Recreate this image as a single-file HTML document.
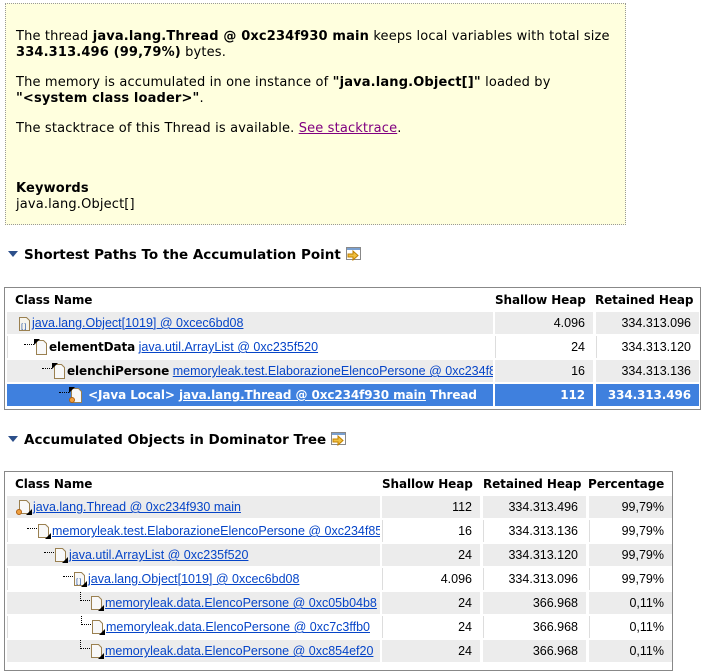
<!DOCTYPE html>
<html><head><meta charset="utf-8"><style>
*{margin:0;padding:0;box-sizing:border-box}
body{width:707px;height:662px;overflow:hidden;background:#fff;font-family:"Liberation Sans","DejaVu Sans",sans-serif;font-size:12.5px;color:#000;position:relative}
b,.hd,.sel{font-family:"DejaVu Sans","Liberation Sans",sans-serif;font-size:12px;letter-spacing:-0.1px}
.box{position:absolute;left:5px;top:3px;width:621px;height:222px;background:#ffffde;border:1px dotted #999;padding:25px 10px 0 10px;line-height:16px;font-family:"DejaVu Sans",sans-serif;font-size:13px;letter-spacing:0.15px}
.box b{font-size:13px;letter-spacing:0.15px}
.box p{margin-bottom:14px}
a{color:#0645c8;text-decoration:underline}
.h{position:absolute;left:8px;font-weight:bold;font-size:13.5px;font-family:"DejaVu Sans",sans-serif}
.h .tri{display:inline-block;width:0;height:0;border-left:5px solid transparent;border-right:5px solid transparent;border-top:6px solid #2c4f8a;margin-right:6px;vertical-align:2px}
.tb{position:absolute;border:1px solid #888;overflow:hidden}
.c{position:absolute;height:22px;line-height:22px;white-space:nowrap;overflow:hidden}
.g{background:#ececec}
.w{background:#fff;border-left:1px solid #ddd}
.r{text-align:right;padding-right:8px}
.hd{font-weight:bold;height:20px;line-height:20px}
.sel{background:#3f80de;color:#fff;font-weight:bold}
.sel a{color:#fff}
.ic{display:inline-block;vertical-align:-4px;margin-right:1px}
.dl{display:inline-block;border-bottom:1px dotted #000;width:10px;height:9px;border-left:1px dotted #000;vertical-align:6px}
</style></head><body>
<div class="box">
<p>The thread <b>java.lang.Thread @ 0xc234f930 main</b> keeps local variables with total size <b>334.313.496 (99,79%)</b> bytes.</p>
<p>The memory is accumulated in one instance of <b>"java.lang.Object[]"</b> loaded by <span style="white-space:nowrap"><b>"&lt;system class loader&gt;"</b>.</span></p>
<p>The stacktrace of this Thread is available. <a style="color:#800080">See stacktrace</a>.</p>
<p style="margin-top:44px;margin-bottom:0"><b>Keywords</b><br>java.lang.Object[]</p>
</div>

<div class="h" style="top:247px"><span class="tri"></span>Shortest Paths To the Accumulation Point <svg width="16" height="14" style="vertical-align:-2px"><rect x="0.5" y="0.5" width="14" height="12" fill="#fff" stroke="#888"/><rect x="1" y="1" width="13" height="2" fill="#7aa0d0"/><path d="M2 7h5v-3l5 4.5-5 4.5v-3H2z" fill="#f0c040" stroke="#c08000"/></svg></div>

<div class="tb" style="left:4px;top:287px;width:697px;height:123px">
<div class="c hd" style="left:10px;top:2px">Class Name</div>
<div class="c hd r" style="left:490px;top:2px;width:98px">Shallow Heap</div>
<div class="c hd r" style="left:590px;top:2px;width:104px">Retained Heap</div>

<div class="c g" style="left:2px;top:24px;width:486px;padding-left:11px"><svg class="ic" width="13" height="15"><path d="M1.5 1.5H8.5L11.5 4.5V14.5H1.5Z" fill="#f6f4ec" stroke="#9a8050"/><text x="3" y="13" font-size="7" fill="#2050a0" font-family="DejaVu Sans">[]</text></svg><a>java.lang.Object[1019] @ 0xcec6bd08</a></div>
<div class="c g r" style="left:490px;top:24px;width:98px">4.096</div>
<div class="c g r" style="left:591px;top:24px;width:103px">334.313.096</div>

<div class="c w" style="left:2px;top:48px;width:486px;padding-left:16px"><span class="dl" style="border-left:none"></span><svg class="ic" width="14" height="16"><path d="M2.5 1.5H9.5L12.5 4.5V15.5H2.5Z" fill="#f8f8f8" stroke="#9a8050"/><path d="M0 0H6L0 6Z" fill="#000"/></svg><b>elementData</b> <a>java.util.ArrayList @ 0xc235f520</a></div>
<div class="c w r" style="left:490px;top:48px;width:98px">24</div>
<div class="c w r" style="left:591px;top:48px;width:103px">334.313.120</div>

<div class="c g" style="left:2px;top:72px;width:486px;padding-left:35px"><span class="dl" style="border-left:none"></span><svg class="ic" width="14" height="16"><path d="M2.5 1.5H9.5L12.5 4.5V15.5H2.5Z" fill="#f8f8f8" stroke="#9a8050"/><path d="M0 0H6L0 6Z" fill="#000"/></svg><b>elenchiPersone</b> <a>memoryleak.test.ElaborazioneElencoPersone @ 0xc234f858</a></div>
<div class="c g r" style="left:490px;top:72px;width:98px">16</div>
<div class="c g r" style="left:591px;top:72px;width:103px">334.313.136</div>

<div class="c sel" style="left:2px;top:96px;width:486px;padding-left:52px"><span class="dl" style="border-left:none;border-color:#000"></span><svg class="ic" width="14" height="16"><path d="M2.5 1.5H9.5L12.5 4.5V15.5H2.5Z" fill="#f8f8f8" stroke="#9a8050"/><path d="M0 0H6L0 6Z" fill="#000"/><circle cx="3" cy="13" r="2.5" fill="#f0a040" stroke="#b06010"/></svg> &lt;Java Local&gt; <a>java.lang.Thread @ 0xc234f930 main</a> Thread</div>
<div class="c sel r" style="left:490px;top:96px;width:98px">112</div>
<div class="c sel r" style="left:591px;top:96px;width:103px">334.313.496</div>
</div>

<div class="h" style="top:432px"><span class="tri"></span>Accumulated Objects in Dominator Tree <svg width="16" height="14" style="vertical-align:-2px"><rect x="0.5" y="0.5" width="14" height="12" fill="#fff" stroke="#888"/><rect x="1" y="1" width="13" height="2" fill="#7aa0d0"/><path d="M2 7h5v-3l5 4.5-5 4.5v-3H2z" fill="#f0c040" stroke="#c08000"/></svg></div>

<div class="tb" style="left:4px;top:471px;width:669px;height:200px">
<div class="c hd" style="left:10px;top:2px">Class Name</div>
<div class="c hd r" style="left:377px;top:2px;width:98px">Shallow Heap</div>
<div class="c hd r" style="left:478px;top:2px;width:104px">Retained Heap</div>
<div class="c hd r" style="left:583px;top:2px;width:84px">Percentage</div>

<div class="c g" style="left:2px;top:24px;width:373px;padding-left:9px"><svg class="ic" width="16" height="16"><path d="M3.5 1.5H10.5L13.5 4.5V14.5H3.5Z" fill="#f8f8f8" stroke="#9a8050"/><path d="M16 16H10L16 10Z" fill="#000"/><circle cx="3" cy="13" r="2.5" fill="#f0a040" stroke="#b06010"/></svg><a>java.lang.Thread @ 0xc234f930 main</a></div>
<div class="c g r" style="left:377px;top:24px;width:98px">112</div>
<div class="c g r" style="left:478px;top:24px;width:103px">334.313.496</div>
<div class="c g r" style="left:584px;top:24px;width:83px">99,79%</div>

<div class="c w" style="left:2px;top:48px;width:373px;padding-left:19px"><span class="dl" style="border-left:none"></span><svg class="ic" width="14" height="16"><path d="M1.5 1.5H8.5L11.5 4.5V14.5H1.5Z" fill="#f8f8f8" stroke="#9a8050"/><path d="M14 16H8L14 10Z" fill="#000"/></svg><a>memoryleak.test.ElaborazioneElencoPersone @ 0xc234f858</a></div>
<div class="c w r" style="left:377px;top:48px;width:98px">16</div>
<div class="c w r" style="left:478px;top:48px;width:103px">334.313.136</div>
<div class="c w r" style="left:584px;top:48px;width:83px">99,79%</div>

<div class="c g" style="left:2px;top:72px;width:373px;padding-left:37px"><span class="dl" style="border-left:none"></span><svg class="ic" width="14" height="16"><path d="M1.5 1.5H8.5L11.5 4.5V14.5H1.5Z" fill="#f8f8f8" stroke="#9a8050"/><path d="M14 16H8L14 10Z" fill="#000"/></svg><a>java.util.ArrayList @ 0xc235f520</a></div>
<div class="c g r" style="left:377px;top:72px;width:98px">24</div>
<div class="c g r" style="left:478px;top:72px;width:103px">334.313.120</div>
<div class="c g r" style="left:584px;top:72px;width:83px">99,79%</div>

<div class="c w" style="left:2px;top:96px;width:373px;padding-left:55px"><span class="dl" style="border-left:none"></span><svg class="ic" width="14" height="16"><path d="M1.5 1.5H8.5L11.5 4.5V14.5H1.5Z" fill="#f8f8f8" stroke="#9a8050"/><text x="3" y="13" font-size="7" fill="#2050a0" font-family="DejaVu Sans">[]</text><path d="M14 16H8L14 10Z" fill="#000"/></svg><a>java.lang.Object[1019] @ 0xcec6bd08</a></div>
<div class="c w r" style="left:377px;top:96px;width:98px">4.096</div>
<div class="c w r" style="left:478px;top:96px;width:103px">334.313.096</div>
<div class="c w r" style="left:584px;top:96px;width:83px">99,79%</div>

<div class="c g" style="left:2px;top:120px;width:373px;padding-left:73px"><span class="dl"></span><svg class="ic" width="14" height="16"><path d="M1.5 1.5H8.5L11.5 4.5V14.5H1.5Z" fill="#f8f8f8" stroke="#9a8050"/><path d="M14 16H8L14 10Z" fill="#000"/></svg><a>memoryleak.data.ElencoPersone @ 0xc05b04b8</a></div>
<div class="c g r" style="left:377px;top:120px;width:98px">24</div>
<div class="c g r" style="left:478px;top:120px;width:103px">366.968</div>
<div class="c g r" style="left:584px;top:120px;width:83px">0,11%</div>

<div class="c w" style="left:2px;top:144px;width:373px;padding-left:73px"><span class="dl"></span><svg class="ic" width="14" height="16"><path d="M1.5 1.5H8.5L11.5 4.5V14.5H1.5Z" fill="#f8f8f8" stroke="#9a8050"/><path d="M14 16H8L14 10Z" fill="#000"/></svg><a>memoryleak.data.ElencoPersone @ 0xc7c3ffb0</a></div>
<div class="c w r" style="left:377px;top:144px;width:98px">24</div>
<div class="c w r" style="left:478px;top:144px;width:103px">366.968</div>
<div class="c w r" style="left:584px;top:144px;width:83px">0,11%</div>

<div class="c g" style="left:2px;top:168px;width:373px;padding-left:73px"><span class="dl"></span><svg class="ic" width="14" height="16"><path d="M1.5 1.5H8.5L11.5 4.5V14.5H1.5Z" fill="#f8f8f8" stroke="#9a8050"/><path d="M14 16H8L14 10Z" fill="#000"/></svg><a>memoryleak.data.ElencoPersone @ 0xc854ef20</a></div>
<div class="c g r" style="left:377px;top:168px;width:98px">24</div>
<div class="c g r" style="left:478px;top:168px;width:103px">366.968</div>
<div class="c g r" style="left:584px;top:168px;width:83px">0,11%</div>
</div>
</body></html>
